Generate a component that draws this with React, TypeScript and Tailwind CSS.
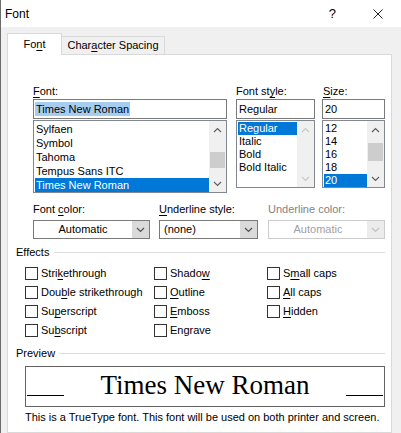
import React from 'react';

const Chevron: React.FC<{ up?: boolean; color?: string }> = ({ up, color = '#606060' }) => (
  <svg width="9" height="6" viewBox="0 0 9 6" fill="none">
    <polyline
      points={up ? '1,5 4.5,1.5 8,5' : '1,1 4.5,4.5 8,1'}
      stroke={color}
      strokeWidth="1.2"
    />
  </svg>
);

const ScrollBar: React.FC<{ thumbTop?: number; thumbH?: number; disabled?: boolean }> = ({
  thumbTop,
  thumbH,
  disabled,
}) => {
  const c = disabled ? '#c8c8c8' : '#606060';
  return (
    <div className="w-[17px] bg-[#f0f0f0] flex flex-col">
      <div className="h-[17px] flex items-center justify-center">
        <Chevron up color={c} />
      </div>
      <div className="flex-1 relative">
        {thumbTop !== undefined && (
          <div
            className="absolute left-[1px] right-[1px] bg-[#cdcdcd]"
            style={{ top: thumbTop, height: thumbH }}
          />
        )}
      </div>
      <div className="h-[17px] flex items-center justify-center">
        <Chevron color={c} />
      </div>
    </div>
  );
};

const ListBox: React.FC<{
  items: string[];
  selected: number;
  rowH: string;
  h: string;
  scroll: React.ReactNode;
}> = ({ items, selected, rowH, h, scroll }) => (
  <div className={`mt-px ${h} border border-[#828790] bg-white flex`}>
    <div className="flex-1 pt-px pl-px overflow-hidden">
      {items.map((it, i) => (
        <div
          key={it}
          className={`${rowH} pl-px whitespace-nowrap ${
            i === selected ? 'bg-[#0078d7] text-white' : ''
          }`}
        >
          {it}
        </div>
      ))}
    </div>
    {scroll}
  </div>
);

const Combo: React.FC<{ text: string; w: string; center?: boolean; disabled?: boolean }> = ({
  text,
  w,
  center,
  disabled,
}) => (
  <div
    className={`mt-[4px] ${w} h-[19px] border flex ${
      disabled ? 'border-[#cccccc] text-[#a0a0a0]' : 'border-[#7a7a7a]'
    } bg-white`}
  >
    <div className={`flex-1 leading-[17px] ${center ? 'text-center' : 'pl-[4px]'}`}>{text}</div>
    <div
      className={`w-[17px] flex items-center justify-center ${
        disabled ? 'bg-[#ececec]' : 'bg-[#dadada]'
      }`}
    >
      <Chevron color={disabled ? '#c0c0c0' : '#505050'} />
    </div>
  </div>
);

const Check: React.FC<{ pre: string; key_: string; post: string }> = ({ pre, key_, post }) => (
  <div className="h-[19px] flex items-center">
    <div className="w-[13px] h-[13px] border border-[#333333] bg-white" />
    <span className="ml-[3px] whitespace-nowrap">
      {pre}
      {key_ && <u className="underline-offset-[2px]">{key_}</u>}
      {post}
    </span>
  </div>
);

export default function App() {
  return (
    <div className="w-[401px] h-[433px] overflow-hidden bg-[#f0f0f0] border-l border-[#6b6b6b] font-['Liberation_Sans',Arial,sans-serif] text-[11px] text-black flex flex-col">
      {/* title bar */}
      <div className="h-[27px] shrink-0 bg-white flex items-center justify-between pl-[4px] pr-[18px] text-[12px]">
        <span>Font</span>
        <div className="flex items-center">
          <span className="mr-[37px] text-[13px]">?</span>
          <svg width="10" height="10" viewBox="0 0 10 10">
            <path d="M0.5 0.5 L9.5 9.5 M9.5 0.5 L0.5 9.5" stroke="#222" strokeWidth="1" />
          </svg>
        </div>
      </div>

      {/* tabs */}
      <div className="h-[27px] shrink-0 flex items-end pl-[6px]">
        <div className="relative z-10 -mb-px w-[55px] h-[22px] bg-white border border-b-0 border-[#d9d9d9] flex items-center justify-center">
          Fo<u className="underline-offset-[2px]">n</u>t
        </div>
        <div className="w-[103px] h-[18px] bg-[#f0f0f0] border border-l-0 border-b-0 border-[#d9d9d9] flex items-center justify-center">
          Char<u className="underline-offset-[2px]">a</u>cter Spacing
        </div>
      </div>

      {/* panel */}
      <div className="ml-[6px] w-[385px] flex-1 bg-white border border-[#d9d9d9]">
        <div className="flex items-start pl-[25px] pt-[29px]">
          <div className="w-[194px]">
            <div className="h-[14px] leading-[14px]">
              <u className="underline-offset-[2px]">F</u>ont:
            </div>
            <div className="mt-px h-[20px] border border-[#7a7a7a] flex items-center pl-px">
              <span className="leading-[14px] bg-[#a6cdf0] px-px">Times New Roman</span>
            </div>
            <ListBox
              items={['Sylfaen', 'Symbol', 'Tahoma', 'Tempus Sans ITC', 'Times New Roman']}
              selected={4}
              rowH="h-[14px] leading-[14px]"
              h="h-[73px]"
              scroll={<ScrollBar thumbTop={14} thumbH={16} />}
            />
          </div>
          <div className="ml-[9px] w-[79px]">
            <div className="h-[14px] leading-[14px]">
              Font st<u className="underline-offset-[2px]">y</u>le:
            </div>
            <div className="mt-px h-[20px] border border-[#7a7a7a] flex items-center pl-[2px]">
              Regular
            </div>
            <ListBox
              items={['Regular', 'Italic', 'Bold', 'Bold Italic']}
              selected={0}
              rowH="h-[13px] leading-[13px]"
              h="h-[68px]"
              scroll={<ScrollBar disabled />}
            />
          </div>
          <div className="ml-[7px] w-[63px]">
            <div className="h-[14px] leading-[14px] pl-px">
              <u className="underline-offset-[2px]">S</u>ize:
            </div>
            <div className="mt-px h-[20px] border border-[#7a7a7a] flex items-center pl-[2px]">
              20
            </div>
            <ListBox
              items={['12', '14', '16', '18', '20']}
              selected={4}
              rowH="h-[13px] leading-[13px]"
              h="h-[68px]"
              scroll={<ScrollBar thumbTop={5} thumbH={18} />}
            />
          </div>
        </div>

        {/* colour / underline row */}
        <div className="flex items-start pl-[25px] mt-[9px]">
          <div className="w-[117px]">
            <div className="h-[14px] leading-[14px]">
              Font <u className="underline-offset-[2px]">c</u>olor:
            </div>
            <Combo text="Automatic" w="w-[117px]" center />
          </div>
          <div className="ml-[9px] w-[99px]">
            <div className="h-[14px] leading-[14px]">
              <u className="underline-offset-[2px]">U</u>nderline style:
            </div>
            <Combo text="(none)" w="w-[99px]" />
          </div>
          <div className="ml-[10px] w-[117px]">
            <div className="h-[14px] leading-[14px] text-[#838383]">Underline color:</div>
            <Combo text="Automatic" w="w-[117px]" center disabled />
          </div>
        </div>

        {/* effects */}
        <div className="mt-[6px] h-[14px] flex items-center pl-[8px] mr-[6px]">
          <span className="leading-[14px]">Effects</span>
          <div className="ml-[5px] flex-1 h-px bg-[#dcdcdc]" />
        </div>
        <div className="mt-[5px] flex pl-[17px]">
          <div className="w-[129px] flex flex-col">
            <Check pre="Stri" key_="k" post="ethrough" />
            <Check pre="Dou" key_="b" post="le strikethrough" />
            <Check pre="Su" key_="p" post="erscript" />
            <Check pre="Su" key_="b" post="script" />
          </div>
          <div className="w-[113px] flex flex-col">
            <Check pre="Shado" key_="w" post="" />
            <Check pre="" key_="O" post="utline" />
            <Check pre="" key_="E" post="mboss" />
            <Check pre="Engrave" key_="" post="" />
          </div>
          <div className="flex flex-col">
            <Check pre="S" key_="m" post="all caps" />
            <Check pre="" key_="A" post="ll caps" />
            <Check pre="" key_="H" post="idden" />
          </div>
        </div>

        {/* preview */}
        <div className="mt-[6px] h-[14px] flex items-center pl-[8px] mr-[6px]">
          <span className="leading-[14px]">Preview</span>
          <div className="ml-[5px] flex-1 h-px bg-[#dcdcdc]" />
        </div>
        <div className="mt-[6px] ml-[17px] w-[360px] h-[41px] border border-[#646464] flex items-start px-px">
          <div className="w-[37px] h-px bg-black mt-[28px]" />
          <div className="flex-1 text-center pt-[5px] text-[27px] leading-[27px] font-['Liberation_Serif','Times_New_Roman',serif]">
            Times New Roman
          </div>
          <div className="w-[37px] h-px bg-black mt-[28px]" />
        </div>
        <div className="mt-[3px] pl-[17px] h-[14px] leading-[14px] whitespace-nowrap">
          This is a TrueType font. This font will be used on both printer and screen.
        </div>
      </div>
    </div>
  );
}
